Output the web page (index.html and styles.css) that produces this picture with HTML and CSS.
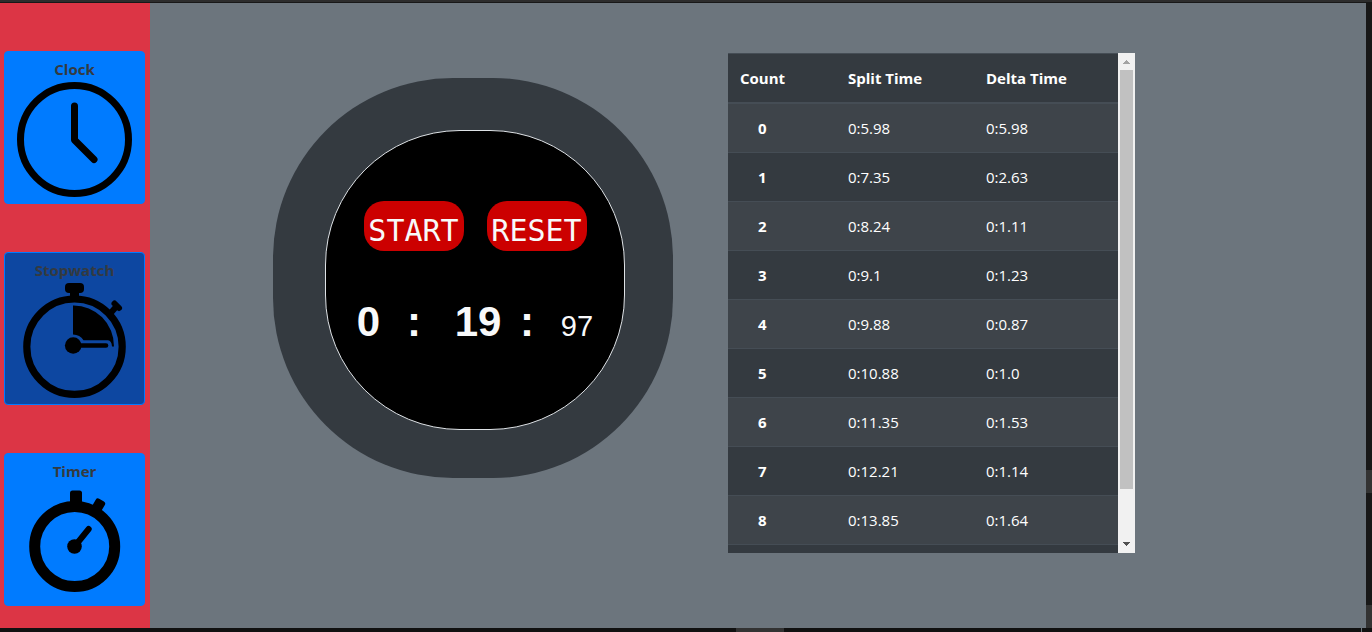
FILE: index.html
```html
<!DOCTYPE html>
<html lang="en">
<head>
<meta charset="utf-8">
<title>Stopwatch</title>
<link rel="stylesheet" href="styles.css">
</head>
<body>
<div class="edge-top"></div>
<div class="middle">
  <nav class="sidebar">
    <button class="tab" type="button">
      <span>Clock</span>
      <svg viewBox="0 0 141 120" fill="none" stroke="#000" stroke-width="7" aria-hidden="true">
        <circle cx="70.5" cy="56.5" r="54"/>
        <path d="M70.5 23v34l19.5 19.5" stroke-linecap="round" stroke-linejoin="round"/>
      </svg>
    </button>
    <button class="tab active" type="button">
      <span>Stopwatch</span>
      <svg viewBox="0 0 141 120" aria-hidden="true">
        <circle cx="70.5" cy="62.7" r="47.7" fill="none" stroke="#000" stroke-width="7.2"/>
        <rect x="61" y="-1" width="19" height="10" rx="4"/>
        <path d="M66 8h9v7h-9z"/>
        <path d="M104.500 31.500l7-8" stroke="#000" stroke-width="6"/>
        <path d="M110.500 19.500l4.500 4.500" stroke="#000" stroke-width="6" stroke-linecap="round"/>
        <path d="M69 21.500A40.500 40.500 0 0 1 110 62.500H108Q107.500 56.500 104 56.300H79.500Q76 50.700 69 50.500Z"/>
        <circle cx="69.200" cy="61.500" r="8.300"/>
        <path d="M70 61.500h32" stroke="#000" stroke-width="4.600" stroke-linecap="round"/>
      </svg>
    </button>
    <button class="tab" type="button">
      <span>Timer</span>
      <svg viewBox="0 0 141 120" aria-hidden="true">
        <circle cx="70.700" cy="61.500" r="40" fill="none" stroke="#000" stroke-width="11"/>
        <rect x="66" y="5.500" width="12" height="14" rx="2.500"/>
        <rect x="89.500" y="14.500" width="10.500" height="13" rx="2.500" transform="rotate(30 95 20)"/>
        <circle cx="70.500" cy="61.500" r="7.300"/>
        <path d="M70.500 61.500L84.700 44" stroke="#000" stroke-width="6" stroke-linecap="round"/>
      </svg>
    </button>
  </nav>
  <main class="content">
    <section class="watch">
      <div class="face">
        <div class="controls">
          <button class="control" type="button">START</button>
          <button class="control" type="button">RESET</button>
        </div>
        <div class="time">
          <span>0</span><span>:</span><span>19</span><span>:</span><span class="hundredths">97</span>
        </div>
      </div>
    </section>
    <section class="laps">
      <div class="scroller">
        <table class="lap-table">
          <thead><tr><th scope="col" class="count">Count</th><th scope="col" class="split">Split Time</th><th scope="col">Delta Time</th></tr></thead>
          <tbody>
            <tr><th scope="row">0</th><td>0:5.98</td><td>0:5.98</td></tr>
            <tr><th scope="row">1</th><td>0:7.35</td><td>0:2.63</td></tr>
            <tr><th scope="row">2</th><td>0:8.24</td><td>0:1.11</td></tr>
            <tr><th scope="row">3</th><td>0:9.1</td><td>0:1.23</td></tr>
            <tr><th scope="row">4</th><td>0:9.88</td><td>0:0.87</td></tr>
            <tr><th scope="row">5</th><td>0:10.88</td><td>0:1.0</td></tr>
            <tr><th scope="row">6</th><td>0:11.35</td><td>0:1.53</td></tr>
            <tr><th scope="row">7</th><td>0:12.21</td><td>0:1.14</td></tr>
            <tr><th scope="row">8</th><td>0:13.85</td><td>0:1.64</td></tr>
          </tbody>
        </table>
      </div>
      <div class="scrollbar" aria-hidden="true">
        <svg viewBox="0 0 17 17" fill="#a3a3a3"><path d="M8 7h1v1h1v1h1v1h1v1H5v-1h1V9h1V8h1z"/></svg>
        <div class="track"><div class="thumb"></div></div>
        <svg viewBox="0 0 17 17" fill="#505050"><path d="M5 6h7v1h-1v1h-1v1H9v1H8V9H7V8H6V7H5z"/></svg>
      </div>
    </section>
  </main>
  <div class="edge-right"><div class="mark"></div><div class="mark"></div></div>
</div>
<div class="edge-bottom"><div class="mark"></div><div class="tick"></div></div>
</body>
</html>
```
FILE: styles.css
```css
* { box-sizing: border-box; }

body {
  margin: 0;
  height: 100vh;
  display: flex;
  flex-direction: column;
  overflow: hidden;
  background: #6c757d;
  color: #fff;
  font: 15px/24px "Open Sans", "Noto Sans", sans-serif;
}

button { font: inherit; cursor: pointer; }

.edge-top {
  flex: none;
  height: 3px;
  background: #2d2d2d;
  border-bottom: 1px solid #181818;
}

.middle {
  flex: 1;
  min-height: 0;
  display: flex;
}

.sidebar {
  flex: none;
  width: 150px;
  padding: 48px 5px 0 4px;
  display: flex;
  flex-direction: column;
  gap: 48px;
  background: #dc3545;
}

.tab {
  display: flex;
  flex-direction: column;
  align-items: stretch;
  gap: 2px;
  padding: 5px 0 0;
  border: 1px solid #007bff;
  border-radius: 4px;
  background: #007bff;
  color: #343a40;
  font-weight: 700;
  text-align: center;
}

.tab.active { background: #0d47a1; }

.tab svg {
  display: block;
  height: 120px;
  margin: 0 -1px;
  overflow: visible;
}

.content {
  flex: 1;
  display: flex;
  align-items: flex-start;
  gap: 55px;
  padding: 50px 0 0 123px;
}

.watch {
  flex: none;
  width: 400px;
  height: 400px;
  margin-top: 25px;
  padding: 52px 0 0 52px;
  border-radius: 45%;
  background: #343a40;
}

.face {
  width: 300px;
  height: 300px;
  padding-top: 70px;
  border: 1px solid #dee2e6;
  border-radius: 45%;
  background: #000;
  color: #f8f9fa;
}

.controls {
  display: flex;
  justify-content: center;
  gap: 23px;
}

.control {
  width: 100px;
  height: 50px;
  padding: 10px 0 0;
  border: 0;
  border-radius: 20px;
  background: #c00;
  color: #f8f9fa;
  font: 30px/40px "DejaVu Sans Mono", "Liberation Mono", monospace;
}

.time {
  display: grid;
  grid-template-columns: 47px 44px 84px 14px 86px;
  align-items: baseline;
  margin: 47px 0 0 19px;
  text-align: center;
  font: 700 42px/48px "Liberation Sans", sans-serif;
}

.hundredths { font: 29px/48px "Liberation Sans", sans-serif; }

.laps {
  flex: none;
  display: flex;
  width: 407px;
  height: 500px;
  background: #343a40;
}

.scroller {
  flex: 1;
  overflow-y: auto;
  scrollbar-width: none;
}

.lap-table {
  width: 100%;
  table-layout: fixed;
  border-collapse: collapse;
  border-bottom: 1px solid #454d55;
}

.lap-table th,
.lap-table td {
  padding: 12px;
  border-top: 1px solid #454d55;
  text-align: left;
}

.lap-table thead th { border-bottom: 2px solid #454d55; }
.lap-table tbody th { padding-left: 30px; }
.lap-table tbody tr:nth-child(odd) { background: #3e444a; }
.count { width: 108px; }
.split { width: 138px; }

.scrollbar {
  flex: none;
  width: 17px;
  display: flex;
  flex-direction: column;
  background: #f1f1f1;
}

.scrollbar svg { flex: none; width: 17px; height: 17px; }
.track { flex: 1; padding: 0 2px; }
.thumb { height: 90%; background: #c1c1c1; }

.edge-right {
  flex: none;
  width: 6px;
  display: flex;
  flex-direction: column;
  justify-content: flex-end;
  gap: 112px;
  background: #181818;
}

.edge-right .mark { height: 23px; background: #333; }

.edge-bottom {
  flex: none;
  height: 4px;
  display: flex;
  justify-content: space-between;
  padding: 0 10px 0 736px;
  background: #111;
}

.edge-bottom .mark { width: 48px; background: #333; }
.edge-bottom .tick { width: 1px; background: #6c757d; }
```
